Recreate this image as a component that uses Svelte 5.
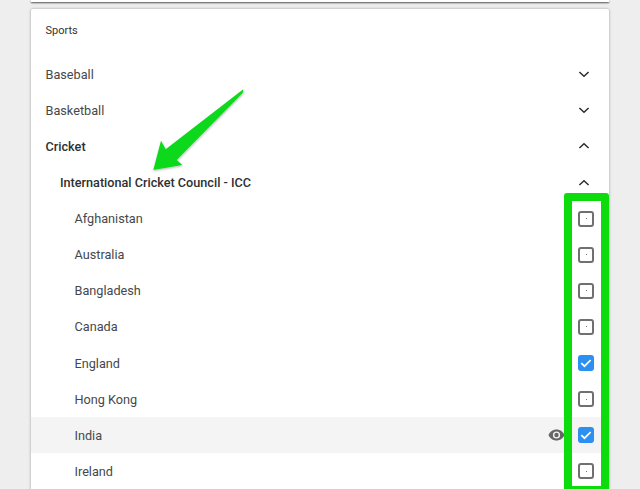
<script>
	const sports = [
		{ label: 'Baseball', open: false },
		{ label: 'Basketball', open: false },
		{ label: 'Cricket', open: true, strong: true }
	];

	const teams = [
		{ label: 'Afghanistan' },
		{ label: 'Australia' },
		{ label: 'Bangladesh' },
		{ label: 'Canada' },
		{ label: 'England', checked: true },
		{ label: 'Hong Kong' },
		{ label: 'India', checked: true, hover: true },
		{ label: 'Ireland' }
	];
</script>

{#snippet chevron(open)}
	<svg class="chevron" width="12" height="8" viewBox="0 0 12 8">
		<path d={open ? 'M1.400 6 6 1.800 10.600 6' : 'M1.400 2 6 6.200 10.600 2'} fill="none" stroke="#2b2b31" stroke-width="1.500" />
	</svg>
{/snippet}

<div class="page">
	<div class="top-card"></div>

	<section class="card">
		<h2 class="title">Sports</h2>

		{#each sports as sport}
			<div class="row" class:strong={sport.strong}>
				<span class="label">{sport.label}</span>
				{@render chevron(sport.open)}
			</div>
		{/each}

		<div class="row league strong">
			<span class="label">International Cricket Council - ICC</span>
			{@render chevron(true)}
		</div>

		{#each teams as team}
			<div class="row team" class:hover={team.hover}>
				<span class="label">{team.label}</span>
				{#if team.hover}
					<svg class="eye" width="17" height="12" viewBox="0 0 17 12">
						<path fill="#666" fill-rule="evenodd" d="M8.500.5C5 .5 1.900 2.700.5 6c1.400 3.300 4.500 5.500 8 5.500s6.600-2.200 8-5.500C15.100 2.700 12 .5 8.500.5Zm0 9.100a3.600 3.600 0 1 1 0-7.200 3.600 3.600 0 0 1 0 7.200Zm0-5.800a2.200 2.200 0 1 0 0 4.400 2.200 2.200 0 0 0 0-4.400Z" />
					</svg>
				{/if}
				<span class="box" class:checked={team.checked}>
					{#if team.checked}
						<svg width="16" height="16" viewBox="0 0 16 16">
							<path d="M3.300 8.200 6.500 11.200 12.700 5" fill="none" stroke="#fff" stroke-width="1.700" />
						</svg>
					{:else}
						<i class="dot"></i>
					{/if}
				</span>
			</div>
		{/each}

		<!-- annotations drawn over the screenshot -->
		<div class="highlight"></div>
		<svg class="arrow" width="100" height="90" viewBox="0 0 100 90">
			<defs>
				<filter id="arrow-shadow" x="-20%" y="-20%" width="140%" height="140%">
					<feDropShadow dx="0.500" dy="1" stdDeviation="1" flood-color="#000" flood-opacity="0.300" />
				</filter>
			</defs>
			<path d="M93.300 4.300 92.700 8 26.700 75 32.300 80 3.300 85 11 55.700 15.700 64.300Z" fill="#10d91a" filter="url(#arrow-shadow)" />
		</svg>
	</section>
</div>

<style>
	:global(body) {
		margin: 0;
		background: #eeeeee;
	}

	.page {
		width: 640px;
		height: 489px;
		overflow: hidden;
		font-family: Roboto, 'Liberation Sans', sans-serif;
		font-size: 12.700px;
		color: #45484b;
	}

	.top-card {
		width: 578px;
		height: 2px;
		margin-left: 31px;
		background: #fff;
		box-shadow: 0 1px 2px rgba(0, 0, 0, 0.7);
	}

	.card {
		position: relative;
		width: 578px;
		height: 520px;
		margin: 7px 0 0 31px;
		background: #fff;
		box-shadow: 0 0 3px rgba(0, 0, 0, 0.35);
		border-radius: 2px 2px 0 0;
	}

	.title {
		margin: 0;
		height: 47.250px;
		padding: 15px 0 0 14.500px;
		box-sizing: border-box;
		font-size: 11px;
		font-weight: 400;
		line-height: 13px;
		color: #333;
	}

	.row {
		display: flex;
		align-items: center;
		height: 36.100px;
		padding: 0 19px 0 14.500px;
	}

	.row.strong {
		font-weight: 500;
		color: #2e3033;
	}

	.league {
		padding-left: 29px;
		font-size: 12.650px;
	}

	.team {
		padding-left: 43.500px;
		padding-right: 15px;
	}

	.team.hover {
		background: #f4f4f4;
	}

	.label {
		flex: 1;
	}

	.eye {
		margin-right: 13px;
	}

	.box {
		display: flex;
		align-items: center;
		justify-content: center;
		width: 16px;
		height: 16px;
		box-sizing: border-box;
		border: 2px solid #707070;
		border-radius: 3px;
	}

	.box.checked {
		border: 0;
		background: #2d8fef;
	}

	.dot {
		width: 1px;
		height: 1px;
		background: #777;
	}

	.highlight {
		position: absolute;
		left: 533px;
		top: 184px;
		width: 45px;
		height: 301px;
		box-sizing: border-box;
		border: 8px solid #0cdc0c;
		border-radius: 3px;
	}

	.arrow {
		position: absolute;
		left: 119px;
		top: 76px;
	}
</style>
